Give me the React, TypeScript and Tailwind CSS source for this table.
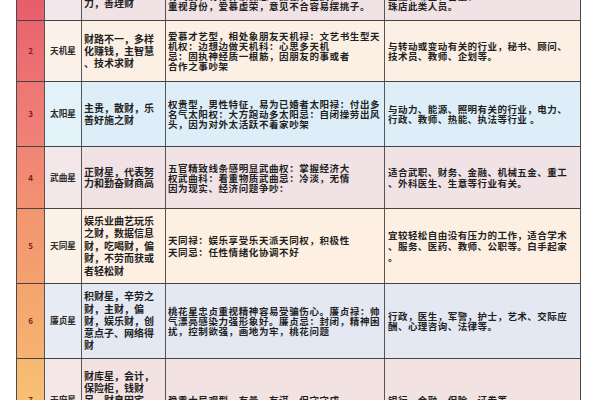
import React from "react";

type Row = {
  n: string;
  name: string;
  desc: string[];
  pers: string[];
  career: string[];
  h: string;
  bg: string;
  num: string;
  dLead?: string;
  pLead?: string;
  cLead?: string;
};

const rows: Row[] = [
  {
    n: "1",
    name: "紫微星",
    desc: ["尊贵之财，领", "导力，权威", "力，善理财"],
    pers: ["帝王型，自尊心强，耳根子软紫微禄：稳重", "大方紫微权：霸气，有领导才能紫微科：", "有气质，有修养紫微忌：孤傲，固执，", "重视身份，爱慕虚荣，意见不合容易摆挑子。"],
    career: ["适合管理、政界、企业主管、", "高层领导、行政主管、", "金融、珠宝、古董、", "珠店此类人员。"],
    h: "h-[60px]",
    bg: "bg-[#f1e2e6]",
    num: "bg-gradient-to-b from-[#e4556a] to-[#e8626d]",
  },
  {
    n: "2",
    name: "天机星",
    desc: ["财路不一，多样", "化赚钱，主智慧", "、技术求财"],
    pers: ["爱慕才艺型，相处象朋友天机禄：文艺书生型天", "机权：边想边做天机科：心思多天机", "忌：固执神经质一根筋，因朋友的事或者", "合作之事吵架"],
    career: ["与转动或变动有关的行业，秘书、顾问、", "技术员、教师、企划等。"],
    h: "h-[61px]",
    bg: "bg-[#fcefe4]",
    num: "bg-gradient-to-b from-[#e9656f] to-[#ed7373]",
  },
  {
    n: "3",
    name: "太阳星",
    desc: ["主贵，散财，乐", "善好施之财"],
    pers: ["权贵型，男性特征，易为已婚者太阳禄：付出多", "名气太阳权：大方跑动多太阳忌：自闭操劳出风", "头，因为对外太活跃不着家吵架"],
    career: ["与动力、能源、照明有关的行业，电力、", "行政、教师、热能、执法等行业 。"],
    h: "h-[65px]",
    bg: "bg-[#ddeef8]",
    num: "bg-gradient-to-b from-[#ed7674] to-[#f08277]",
  },
  {
    n: "4",
    name: "武曲星",
    desc: ["正财星，代表努", "力和勤奋财商高"],
    pers: ["五官精致线条感明显武曲权：掌握经济大", "权武曲科：看重物质武曲忌：冷淡，无情", "因为现实、经济问题争吵："],
    career: ["适合武职、财务、金融、机械五金、重工", "、外科医生、生意等行业有关。"],
    h: "h-[62px]",
    bg: "bg-[#f1e2e5]",
    num: "bg-gradient-to-b from-[#f08574] to-[#f29272]",
    dLead: "leading-[10.5px]",
    cLead: "leading-[11px]",
  },
  {
    n: "5",
    name: "天同星",
    desc: ["娱乐业曲艺玩乐", "之财，数据信息", "财，吃喝财，偏", "财，不劳而获或", "者轻松财"],
    pers: ["天同禄：娱乐享受乐天派天同权，积极性", "天同忌：任性情绪化协调不好"],
    career: ["宜较轻松自由没有压力的工作，适合学术", "、服务、医药、教师、公职等。白手起家", "。"],
    h: "h-[75px]",
    bg: "bg-[#fdefe2]",
    num: "bg-gradient-to-b from-[#f29570] to-[#f4a16f]",
    dLead: "leading-[12.5px]",
    pLead: "leading-[12.5px]",
    cLead: "leading-[11px]",
  },
  {
    n: "6",
    name: "廉贞星",
    desc: ["积财星，辛劳之", "财，主财，偏", "财，娱乐财，创", "意点子、网络得", "财"],
    pers: ["桃花星忠贞重视精神容易受骗伤心。廉贞禄：帅", "气漂亮感染力强形象好。廉贞忌：封闭，精神困", "扰，控制欲强，画地为牢，桃花问题"],
    career: ["行政，医生，军警，护士，艺术、交际应", "酬、心理咨询、法律等。"],
    h: "h-[75px]",
    bg: "bg-[#e3e8f3]",
    num: "bg-gradient-to-b from-[#f4a46f] to-[#f6b270]",
    dLead: "leading-[12.2px]",
  },
  {
    n: "7",
    name: "天府星",
    desc: ["财库星，会计，", "保险柜，钱财", "足，财帛田宅", "皆旺，守财之", "财"],
    pers: ["稳重大局观型，有量，有谋，保守守成"],
    career: ["银行、金融、保险、证券等"],
    h: "h-[82px]",
    bg: "bg-[#f3e2e2]",
    num: "bg-gradient-to-b from-[#f6b872] to-[#f8c878]",
    dLead: "leading-[11.8px]",
  },
];

function Lines({ lines, className }: { lines: string[]; className: string }) {
  return (
    <div className={className}>
      {lines.map((l, i) => (
        <div key={i} className="whitespace-nowrap">
          {l}
        </div>
      ))}
    </div>
  );
}

export default function App() {
  return (
    <div
      className="h-[400px] w-[600px] overflow-hidden bg-white text-[#1f1f1f]"
      style={{ fontFamily: '"Noto Sans CJK SC", "Noto Sans", sans-serif' }}
    >
      <div className="ml-[16px] mt-[-39px] w-[565px] border-x border-[#4a4a4a]">
        {rows.map((r) => (
          <div
            key={r.n}
            className={`grid grid-cols-[28px_37px_84px_219px_195px] border-b-[1.5px] border-[#444] ${r.h} ${r.bg}`}
          >
            <div className={`flex items-center justify-center border-r border-[#555] ${r.num}`}>
              <span className="text-[8px] font-bold text-[#7e1b1b]">{r.n}</span>
            </div>
            <div className="flex items-center justify-center border-r border-[#555] bg-white/20">
              <span className="whitespace-nowrap text-[8.7px] font-semibold text-[#2e2e2e]">{r.name}</span>
            </div>
            <div className="flex items-center border-r border-[#555] pl-[2px]">
              <Lines lines={r.desc} className={`text-[10px] font-semibold ${r.dLead ?? "leading-[12px]"}`} />
            </div>
            <div className="flex items-center border-r border-[#555] pl-[2px]">
              <Lines
                lines={r.pers}
                className={`text-[9.5px] font-semibold tracking-[0.6px] ${r.pLead ?? "leading-[10px]"}`}
              />
            </div>
            <div className="flex items-center pl-[3px]">
              <Lines
                lines={r.career}
                className={`text-[9.5px] font-semibold tracking-[0.45px] ${r.cLead ?? "leading-[10px]"}`}
              />
            </div>
          </div>
        ))}
      </div>
    </div>
  );
}
